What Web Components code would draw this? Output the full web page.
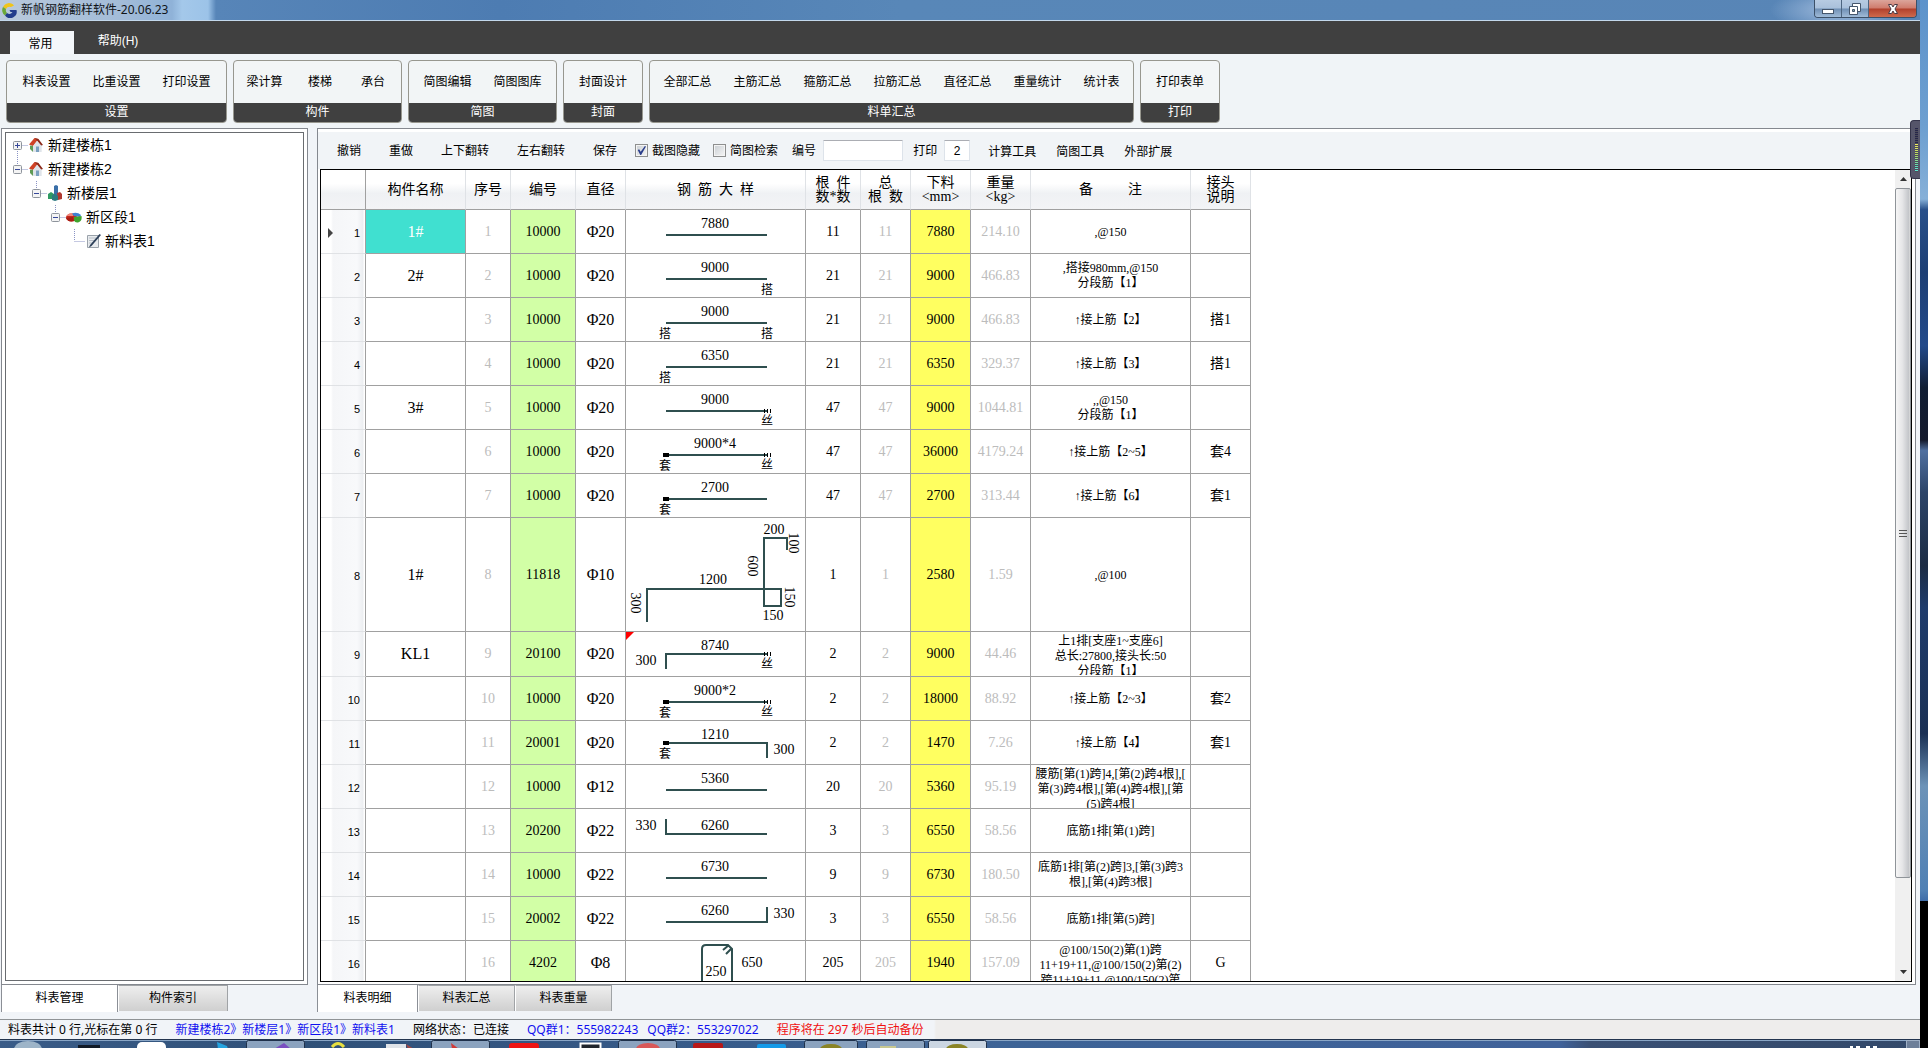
<!DOCTYPE html>
<html lang="zh-CN">
<head>
<meta charset="utf-8">
<title>新帆钢筋翻样软件-20.06.23</title>
<style>
html, body { margin: 0; height: 100%; overflow: hidden; }
body { font: 12px/16px "Liberation Sans", "Noto Sans CJK SC", sans-serif; color: #000; background: #000; }
</style>
</head>
<body>
<rebar-app></rebar-app>
<script>
const define = (name, html, setup) => {
  const tpl = document.createElement('template');
  tpl.innerHTML = html;
  customElements.define(name, class extends HTMLElement {
    constructor() {
      super();
      this.attachShadow({ mode: 'open' }).append(tpl.content.cloneNode(true));
    }
    connectedCallback() { if (setup && !this.ready) { this.ready = true; setup(this, this.shadowRoot); } }
  });
};
const BTN = 'button{font:inherit;color:inherit;background:none;border:0;margin:0;padding:0;white-space:nowrap}';

/* ---------- title bar ---------- */
define('title-bar', `<style>${BTN}
:host{display:flex;height:20px;border-bottom:1px solid #c3d8ec;justify-content:space-between;
 background:radial-gradient(ellipse 70px 22px at calc(100% - 80px) 10px,#a5bfe0 0,rgba(130,165,208,0) 100%),
 linear-gradient(90deg,#b9c9dc 0,#a3bcd8 120px,#8fb2d8 172px,#a4c8ea 182px,#9cc3e8 208px,#5785b8 216px,#4d7cb2 500px,#5887b8 900px,#5885b6 100%)}
.t{display:flex;align-items:center;gap:4px;padding-left:1px;font:12px/20px "Noto Sans","Noto Sans CJK SC",sans-serif;color:#101418}
.c{display:flex;height:17px;margin-right:3px;border:1px solid #3c5068;border-top:0;border-radius:0 0 4px 4px;overflow:hidden}
.c button{display:flex;align-items:center;justify-content:center;width:27px;background:linear-gradient(#b7cbe2 0,#a9c0db 48%,#6f8fb4 52%,#a0bbd8 100%);border-right:1px solid #4d6580}
.c button.x{width:47px;border:0;background:linear-gradient(#dba59b 0,#cf7b6c 48%,#b1402c 52%,#cf6a4c 100%)}
</style>
<div class="t"><svg width="16" height="16" viewBox="0 0 16 16"><path d="M13 3.5A6.5 6.5 0 0 0 2 5l3 2a4 4 0 0 1 5-2z" fill="#f0c419"/><path d="M2 5a6.500 6.500 0 0 0 2 8.500l2-2.500a4 4 0 0 1-1-4z" fill="#6aa838"/><path d="M4 13.500a6.500 6.500 0 0 0 11.500-5.500H8.500l1 2h2a4 4 0 0 1-5.500 1z" fill="#223c8c"/></svg><span>新帆钢筋翻样软件-20.06.23</span></div>
<div class="c">
<button aria-label="最小化"><svg width="14" height="14"><rect x="1.500" y="7.500" width="11" height="4" fill="#fff" stroke="#45566c"/></svg></button>
<button aria-label="还原"><svg width="14" height="14"><path d="M4.500 1.500h8v8h-8z" fill="#fff" stroke="#45566c"/><path d="M1.500 4.500h8v8h-8z" fill="#fff" stroke="#45566c"/><path d="M4.500 7.500h2v2h-2z" fill="#8aa" stroke="#45566c"/></svg></button>
<button class="x" aria-label="关闭"><svg width="14" height="12"><path d="M2.500 1.500h3L7 4l1.500-2.500h3L9 6l2.500 4.500h-3L7 8l-1.500 2.500h-3L5 6z" fill="#fff" stroke="#4a3a44"/></svg></button>
</div>`);

/* ---------- menu tabs ---------- */
define('menu-tabs', `<style>${BTN}
:host{display:flex;align-items:flex-end;height:33px;background:#404040;padding-left:10px}
button{height:23px;width:88px;text-align:center;color:#fff;margin-bottom:2px}
button.on{background:#f4f7fa;color:#000;margin:0;width:64px;padding:3px 3px 0 0}
</style><button class="on">常用</button><button>帮助(H)</button>`);

/* ---------- ribbon ---------- */
define('ribbon-group', `<style>
:host{display:flex;flex-direction:column;box-sizing:border-box;height:63px;min-width:80px;border:1px solid #97978f;border-radius:4px;overflow:hidden;background:#f2f5f6}
.b{flex:1;display:flex;justify-content:center;align-items:stretch}
.f{height:19px;line-height:19px;background:#404040;color:#fff;text-align:center}
::slotted(button){font:inherit;border:0;background:none;margin:0;padding:0 11px;min-width:53px;white-space:nowrap}
</style><div class="b"><slot></slot></div><div class="f"></div>`,
(h, r) => { r.querySelector('.f').textContent = h.getAttribute('label'); });

define('ribbon-bar', `<style>
:host{display:block;background:#f0f4f7}
div{display:flex;gap:6px;padding:6px 6px 5px}
</style><div></div>`, (h, r) => {
  const groups = [
    ['设置', 221, ['料表设置', '比重设置', '打印设置']],
    ['构件', 169, ['梁计算', '楼梯', '承台']],
    ['简图', 149, ['简图编辑', '简图图库']],
    ['封面', 80, ['封面设计']],
    ['料单汇总', 485, ['全部汇总', '主筋汇总', '箍筋汇总', '拉筋汇总', '直径汇总', '重量统计', '统计表']],
    ['打印', 80, ['打印表单']]];
  r.querySelector('div').innerHTML = groups.map(([l, w, b]) =>
    `<ribbon-group label="${l}" style="width:${w}px">${b.map(t => `<button>${t}</button>`).join('')}</ribbon-group>`).join('');
});

/* ---------- tree ---------- */
const ICONS = {
  house: '<path d="M2 7l6-5 6 6v7H5z" fill="#e9edf0"/><path d="M1 7.500L6.500 1l4 1L5 9z" fill="#cf4226"/><path d="M6.500 1l4 1 4.500 6-2 .5-4-5z" fill="#8d2a1b"/><path d="M2 8.500l3 .5v6L2 12z" fill="#5f9a55"/><path d="M5 9l4-5 4 4.500V15H5z" fill="#dfe4ea"/><rect x="8" y="9.500" width="3" height="5.500" fill="#7aa0c0"/>',
  floor: '<path d="M7 1l2-1 2 1v11H7z" fill="#3a6fa8"/><path d="M1 9l3-2 3 2v5H1z" fill="#2f9a63"/><path d="M10 8l3-1 2 2v5l-4 1z" fill="#b03a30"/><path d="M5 10l3-1 3 2v4l-3 1-3-1z" fill="#2d7a80"/>',
  zone: '<ellipse cx="5.500" cy="8.500" rx="5.500" ry="4" fill="#c7281c"/><path d="M0.500 7q2-3 6-3l1 3z" fill="#f0877a"/><path d="M6 4.500q5-2 9 1.500l-1 2-6-1z" fill="#3e7fd0"/><path d="M8 8l7.500-1q1 5-3.500 6.500-3 .5-4-2z" fill="#3fa32e"/><path d="M0 9l7-1 1 4q-6 1.500-8-3z" fill="#a81d14"/>',
  sheet: '<path d="M2.500 2.500h11v12h-11z" fill="#e8ebee" stroke="#9aa2aa"/><path d="M4 5h7M4 7.500h6M4 10h4" stroke="#b7bec6"/><path d="M14.500 1L5 12l-1 2.500L6.500 13 16 2z" fill="#2c3f58"/>'
};
define('tree-node', `<style>:host{display:flex;align-items:center;height:24px;font-size:14px}
span{padding:0 4px}.i{flex:none}</style><slot></slot>`, (h, r) => {
  const lv = +h.getAttribute('level'), x = 11 + lv * 19 + .5, box = h.getAttribute('box');
  const up = h.hasAttribute('up') ? `M${x} 0V12` : '', down = h.hasAttribute('down') ? `M${x} 12V24` : '';
  r.innerHTML = r.innerHTML.replace('<slot></slot>', '') +
    `<svg class="i" width="${22 + lv * 19}" height="24"><path d="${up}${down}M${x} 12.500H${x + 11}" fill="none" stroke="#8a93c4" stroke-dasharray="1 1"/>` +
    (box ? `<rect x="${x - 4}" y="8.500" width="8" height="8" rx="1" fill="#f4f4f4" stroke="#8e949c"/><path d="M${x - 2.5} 12.500h5${box === '+' ? `M${x} 10v5` : ''}" stroke="#37489a"/>` : '') +
    `</svg><svg class="i" width="16" height="16" viewBox="0 0 16 16">${ICONS[h.getAttribute('icon')]}</svg><span><slot></slot></span>`;
});

/* ---------- bottom tab strip ---------- */
define('tab-strip', `<style>
:host{display:flex;align-items:flex-start;height:27px}
::slotted(button){font:inherit;height:26px;padding:0 0 2px;margin:0;box-sizing:border-box;width:var(--tab,97px);border:1px solid #a0a3a6;border-left-color:#fff;border-bottom:0;background:linear-gradient(#eee,#cfcfcf)}
::slotted(button.on){height:27px;width:var(--on,101px);background:#fff;border:1px solid #8b8f96;border-width:0 1px}
</style><slot></slot>`);

define('tree-panel', `<style>
:host{display:flex;flex-direction:column}
.o{flex:1;display:flex;border:1px solid #84888f;background:#fff;padding:3px}
.n{flex:1;border:1px solid #696c70}
tab-strip{--on:117px;--tab:110px}
</style><div class="o"><div class="n">
<tree-node level="0" box="+" icon="house" down>新建楼栋1</tree-node>
<tree-node level="0" box="-" icon="house" up>新建楼栋2</tree-node>
<tree-node level="1" box="-" icon="floor" up>新楼层1</tree-node>
<tree-node level="2" box="-" icon="zone" up>新区段1</tree-node>
<tree-node level="3" icon="sheet" up>新料表1</tree-node>
</div></div><tab-strip><button class="on">料表管理</button><button>构件索引</button></tab-strip>`);

/* ---------- tool row ---------- */
define('tool-row', `<style>${BTN}
:host{display:flex;align-items:center;height:37px;background:#f1f4f7;padding-left:5px;margin-top:3px}
.e{display:flex}.e button{padding:0 14px}
.k{display:flex;gap:13px;margin:0 14px 0 4px}
label{display:flex;align-items:center;white-space:nowrap}
.k label{gap:4px}
input{font:inherit;margin:0;box-sizing:border-box}
input[type=text]{height:21px;border:1px solid #dde3ea;border-top-color:#abadb3;background:#fff;margin-left:7px;padding:0;text-align:center;border-radius:1px}
input[type=checkbox]{appearance:none;width:13px;height:13px;border:1px solid #8e8f8f;background:linear-gradient(135deg,#c9ced3,#f6f6f6);box-shadow:inset 0 0 0 1px #f4f4f4}
input:checked::before{content:"";display:block;width:11px;height:11px;background:#2c3f8c;clip-path:polygon(15% 45%,28% 38%,42% 62%,80% 8%,90% 14%,46% 92%,38% 92%)}
.a{width:80px}.p{width:26px}.q{margin-left:10px}
.t{display:flex;margin-left:8px;padding-top:2px}.t button{padding:0 10px}
</style>
<div class="e"><button>撤销</button><button>重做</button><button>上下翻转</button><button>左右翻转</button><button>保存</button></div>
<div class="k"><label><input type="checkbox" checked>截图隐藏</label><label><input type="checkbox">简图检索</label></div>
<label>编号<input type="text" class="a"></label><label class="q">打印<input type="text" class="p" value="2"></label>
<div class="t"><button>计算工具</button><button>简图工具</button><button>外部扩展</button></div>`);

/* ---------- rebar sketches ---------- */
const txt = (x, y, s) => `<text x="${x}" y="${y}">${s}</text>`;
const mark = (x, y, s) => `<text class="m" x="${x}" y="${y}">${s}</text>`;
const rot = (x, y, s) => `<text transform="translate(${x - 4} ${y}) rotate(90)">${s}</text>`;
const line = d => `<path d="${d}"/>`;
const BAR = line('M40 25H141');
const sleeve = y => `<rect x="37" y="${y - 2}" width="6" height="4"/>`;
const thread = y => `<path class="h" d="M138.500 ${y - 2}v4M141.500 ${y - 2}v4M144.500 ${y - 2}v4"/>` + mark(141, y + 14, '丝');
const SKETCH = [
  BAR + txt(89, 18, '7880'),
  BAR + txt(89, 18, '9000') + mark(141, 40, '搭'),
  BAR + txt(89, 18, '9000') + mark(39, 40, '搭') + mark(141, 40, '搭'),
  BAR + txt(89, 18, '6350') + mark(39, 40, '搭'),
  BAR + txt(89, 18, '9000') + thread(25),
  BAR + txt(89, 18, '9000*4') + sleeve(25) + mark(39, 40, '套') + thread(25),
  BAR + txt(89, 18, '2700') + sleeve(25) + mark(39, 40, '套'),
  line('M21 104V71H155V88H138V20H161V32') + txt(148, 16, '200') + txt(87, 66, '1200') + txt(147, 102, '150') +
    rot(167, 25, '100') + rot(126, 48, '600') + rot(9, 85, '300') + rot(163, 79, '150'),
  '<path class="r" d="M0 0h8L0 8z"/>' + line('M40 37V22H141') + txt(89, 18, '8740') + txt(20, 33, '300') + thread(22),
  BAR + txt(89, 18, '9000*2') + sleeve(25) + mark(39, 40, '套') + thread(25),
  line('M40 22H141V37') + txt(89, 18, '1210') + txt(158, 33, '300') + sleeve(22) + mark(39, 37, '套'),
  BAR + txt(89, 18, '5360'),
  line('M40 10V25H141') + txt(89, 21, '6260') + txt(20, 21, '330'),
  BAR + txt(89, 18, '6730'),
  line('M40 25H141V10') + txt(89, 18, '6260') + txt(158, 21, '330'),
  line('M76 44V8Q76 4 80 4H102L106 8V44M97 9L103 4M100 13L106 7') + txt(90, 35, '250') + txt(126, 26, '650')
];
/* name, id, diameter, count, cut length, weight, remark, joint, height */
const ROWS = [
  ['1#', '10000', '20', '11', '7880', '214.10', ',@150', ''],
  ['2#', '10000', '20', '21', '9000', '466.83', ',搭接980mm,@150<br>分段筋【1】', ''],
  ['', '10000', '20', '21', '9000', '466.83', '↑接上筋【2】', '搭1'],
  ['', '10000', '20', '21', '6350', '329.37', '↑接上筋【3】', '搭1'],
  ['3#', '10000', '20', '47', '9000', '1044.81', ',,@150<br>分段筋【1】', ''],
  ['', '10000', '20', '47', '36000', '4179.24', '↑接上筋【2~5】', '套4'],
  ['', '10000', '20', '47', '2700', '313.44', '↑接上筋【6】', '套1'],
  ['1#', '11818', '10', '1', '2580', '1.59', ',@100', '', 114],
  ['KL1', '20100', '20', '2', '9000', '44.46', '上1排[支座1~支座6]<br>总长:27800,接头长:50<br>分段筋【1】', '', 45],
  ['', '10000', '20', '2', '18000', '88.92', '↑接上筋【2~3】', '套2'],
  ['', '20001', '20', '2', '1470', '7.26', '↑接上筋【4】', '套1'],
  ['', '10000', '12', '20', '5360', '95.19', '腰筋[第(1)跨]4,[第(2)跨4根],[<br>第(3)跨4根],[第(4)跨4根],[第<br>(5)跨4根]', ''],
  ['', '20200', '22', '3', '6550', '58.56', '底筋1排[第(1)跨]', ''],
  ['', '10000', '22', '9', '6730', '180.50', '底筋1排[第(2)跨]3,[第(3)跨3<br>根],[第(4)跨3根]', ''],
  ['', '20002', '22', '3', '6550', '58.56', '底筋1排[第(5)跨]', ''],
  ['', '4202', '8', '205', '1940', '157.09', '@100/150(2)第(1)跨<br>11+19+11,@100/150(2)第(2)<br>跨11+19+11,@100/150(2)第', 'G']
];
define('rebar-table', `<style>
:host{display:block;overflow:hidden}
table{table-layout:fixed;width:930px;border-collapse:separate;border-spacing:0;font:14px/16px "Liberation Serif","Noto Sans CJK SC",serif}
th,td{box-sizing:border-box;padding:0;text-align:center;vertical-align:middle;font-weight:400;border-right:1px solid #a0a0a0;border-bottom:1px solid #a0a0a0;overflow:hidden}
thead th{height:40px;background:linear-gradient(#fff 0,#fff 35%,#eff1f4 60%,#f3f4f6 100%);border-right-color:#dfe2e6;line-height:14px;white-space:pre}
thead th:first-child{border-right-color:#a0a0a0}
td{height:44px}
tbody th{font:11px/14px "Liberation Sans",sans-serif;text-align:right;border-bottom-color:#e0e2e5;background:linear-gradient(90deg,#fff 10px,#f5f6f8 12px,#f8f9fb 36px,#eceef1 42px,#fff 43px)}
tbody th div{display:flex;align-items:center;justify-content:space-between;padding:2px 5px 0 7px}
.n,.d{font-size:16px}
.g{color:#bcbcbc}.id{background:#d2ffa6}.len{background:#ffff60}
.sel{background:#40e0d0;color:#fff}
.w{font-size:12px;line-height:15px;white-space:nowrap}
.w div{box-sizing:border-box;max-height:42px;padding-top:1px;overflow:hidden}
svg{display:block}
svg path{fill:none;stroke:#2f4f4f;stroke-width:2}
svg path.h{stroke:#000;stroke-width:1}
svg path.r{fill:#f00;stroke:none}
svg path.a{fill:#444;stroke:none}
text{text-anchor:middle}
text.m{font-size:12px}
</style>
<table><colgroup></colgroup><thead><tr></tr></thead><tbody></tbody></table>`, (h, r) => {
  r.querySelector('colgroup').innerHTML = [45, 100, 45, 65, 50, 180, 55, 50, 60, 60, 160, 60].map(w => `<col style="width:${w}px">`).join('');
  r.querySelector('thead tr').innerHTML = ['', '构件名称', '序号', '编号', '直径', '钢  筋  大  样', '根  件\n数*数', '总\n根  数', '下料\n&lt;mm&gt;', '重量\n&lt;kg&gt;', '备          注', '接头\n说明'].map(t => `<th scope="col">${t}</th>`).join('');
  r.querySelector('tbody').innerHTML = ROWS.map(([n, id, d, c, l, w, m, j, ht = 44], i) =>
    `<tr style="height:${ht}px"><th scope="row"><div><svg width="6" height="10"><path class="a" d="${i ? '' : 'M0 0l5 5-5 5z'}"/></svg>${i + 1}</div></th>` +
    `<td class="n${i ? '' : ' sel'}">${n}</td><td class="g">${i + 1}</td><td class="id">${id}</td><td class="d">Φ${d}</td>` +
    `<td><svg width="179" height="${ht - 1}">${SKETCH[i]}</svg></td><td>${c}</td><td class="g">${c}</td><td class="len">${l}</td><td class="g">${w}</td>` +
    `<td class="w"><div>${m}</div></td><td>${j}</td></tr>`).join('');
});

define('scroll-rail', `<style>${BTN}
:host{display:flex;flex-direction:column;width:16px;background:#f0f0f0}
button{height:18px;display:flex;align-items:center;justify-content:center}
.m{flex:1;display:flex;flex-direction:column}
.t{height:89%;box-sizing:border-box;border:1px solid #8f9499;border-radius:2px;background:linear-gradient(90deg,#f6f6f6,#e6e6e8 45%,#c4c6ca 90%,#dcdcdc);display:flex;align-items:center;justify-content:center}
</style><button aria-label="向上"><svg width="7" height="4"><path d="M0 4l3.500-4L7 4z" fill="#333"/></svg></button>
<div class="m"><div class="t"><svg width="8" height="8"><path d="M0 1.500h8M0 4.500h8M0 7.500h8" stroke="#555"/></svg></div></div>
<button aria-label="向下"><svg width="7" height="4"><path d="M0 0l3.500 4L7 0z" fill="#333"/></svg></button>`);

define('sheet-panel', `<style>
:host{display:flex;flex-direction:column;min-width:0;min-height:0}
.o{flex:1;min-height:0;display:flex;flex-direction:column;border:1px solid #84888f;background:#fff}
.n{flex:1;min-height:0;display:flex;border:1px solid #000;margin:0 3px 2px 2px;background:#fff}
rebar-table{flex:1;min-width:0}
</style><div class="o"><tool-row></tool-row><div class="n"><rebar-table></rebar-table><scroll-rail></scroll-rail></div></div>
<tab-strip><button class="on">料表明细</button><button>料表汇总</button><button>料表重量</button></tab-strip>`);

/* ---------- status bar ---------- */
define('status-line', `<style>
:host{display:flex;gap:18px;align-items:center;height:19px;border-top:1px solid #8f9396;padding-left:8px;white-space:nowrap;
 background:linear-gradient(90deg,#f1f4f8 934px,#eeedec 936px);font:12px/18px "Noto Sans","Noto Sans CJK SC",sans-serif}
.b{color:#1010f0}.q{display:flex;gap:9px}.r{color:#f01010}
</style><span>料表共计 0 行,光标在第 0 行</span><span class="b">新建楼栋2》新楼层1》新区段1》新料表1</span><span>网络状态：已连接</span><span class="b q"><span>QQ群1：555982243</span><span>QQ群2：553297022</span></span><span class="r">程序将在 297 秒后自动备份</span>`);

/* ---------- desktop taskbar ---------- */
define('task-bar', `<style>
:host{display:flex;justify-content:space-between;height:9px;overflow:hidden;background:linear-gradient(#22344e 0,#22344e 1px,#8aa6c6 1px,#8aa6c6 2px,transparent 2px),linear-gradient(90deg,#3a5c88 0,#2f5078 300px,#3d6396 1000px,#40629a 1560px,#3a5074 1590px,#33496a 100%)}
svg{flex:none;display:block}
</style><svg width="1000" height="9">
<ellipse cx="28" cy="10" rx="14" ry="8" fill="#9db4c8"/><rect x="78" y="6" width="22" height="4" fill="#111a26"/><rect x="137" y="3" width="29" height="12" rx="5" fill="#fff"/><path d="M217 3l10 4 1 3h-10z" fill="#25a4e0"/>
<g fill="#8ba3bf" stroke="#1f314b"><rect x="246.500" y="1.500" width="58" height="12" rx="2"/><rect x="431.500" y="1.500" width="58" height="12" rx="2"/><rect x="618.500" y="1.500" width="58" height="12" rx="2"/><rect x="804.500" y="1.500" width="53" height="12" rx="2"/><rect x="866.500" y="1.500" width="58" height="12" rx="2"/><rect x="928.500" y="1.500" width="58" height="12" rx="2" fill="#cbd6e2"/></g>
<path d="M274 10l10-6 7 6z" fill="#7a4fc0"/><path d="M332 8q6-7 12 0" fill="none" stroke="#e8e040" stroke-width="3"/><path d="M386 5h20v5h-20z" fill="#dfe3e8"/><path d="M406 5l8 5h-6z" fill="#a04848"/><path d="M451 4l8 6h-7z" fill="#d03a38"/><rect x="509" y="4" width="30" height="9" rx="3" fill="#ee1414"/><path d="M580.500 9V4.500h20V9" fill="#20252c" stroke="#fff" stroke-width="2"/><ellipse cx="648" cy="10" rx="12" ry="6" fill="#d85858"/><rect x="693" y="4" width="30" height="9" rx="2" fill="#b81818"/><rect x="757" y="5" width="29" height="9" rx="2" fill="#149ae8"/><ellipse cx="831" cy="10" rx="11" ry="5" fill="#8a8426"/><path d="M880 7h16v3h-16z" fill="#c8c890"/><ellipse cx="957" cy="10" rx="11" ry="5" fill="#8a8426"/></svg>
<svg width="72" height="9"><path d="M2 8h3M8 8h4M18 8h4M25 8h4" stroke="#fff" stroke-width="2"/><rect x="58.500" y="1.500" width="13" height="10" fill="#6d7f99" stroke="#9fb0c6"/></svg>`);

define('level-meter', `<style>
:host{display:block;width:10px;height:59px;box-sizing:border-box;padding:7px 2px 6px 4px;border-radius:4px 0 0 4px;background:#55556a;border:1px solid #34344a;border-right:0}
div{height:100%;background:repeating-linear-gradient(transparent 0 1px,#4a4a58 1px 2px),linear-gradient(#26264a 0,#26264a 34%,#f0ea60 36%,#b8dc60 60%,#5fe0b8 85%,#60e8d8 100%)}
</style><div></div>`);

define('rebar-app', `<style>
:host{display:flex;height:100vh;position:relative}
.win{flex:1;min-width:0;display:flex;flex-direction:column;background:#f1f4f8}
.main{flex:1;min-height:0;display:flex;gap:9px;padding:0 4px 7px 1px}
tree-panel{width:307px;flex:none}
sheet-panel{flex:1}
.desk{width:8px;background:linear-gradient(#5d93cb 0,#6d9fd0 12%,#86b0d8 19%,#28508a 20%,#1d3f74 26%,#234a8a 33%,#101d33 37%,#141a2c 42%,#5070a0 43%,#2c4468 47%,#1c2c44 54%,#1f3c6c 58%,#1a3054 70%,#6c93b8 75%,#5080b4 85%,#3e6ca8 86%,#000 86%)}
level-meter{position:absolute;right:8px;top:120px}
</style><div class="win"><title-bar></title-bar><menu-tabs></menu-tabs><ribbon-bar></ribbon-bar>
<div class="main"><tree-panel></tree-panel><sheet-panel></sheet-panel></div>
<status-line></status-line><task-bar></task-bar></div><div class="desk"></div><level-meter></level-meter>`);
</script>
</body>
</html>
